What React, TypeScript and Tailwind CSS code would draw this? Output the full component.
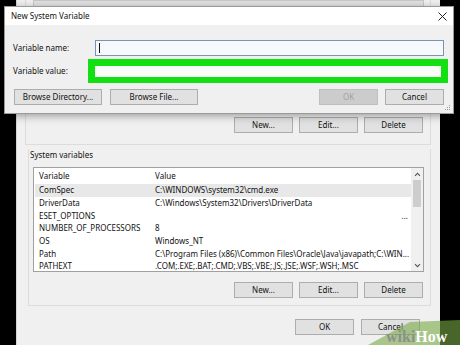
import React from "react";

type Row = { name: string; value: string; selected?: boolean; more?: boolean };

const rows: Row[] = [
  { name: "ComSpec", value: "C:\\WINDOWS\\system32\\cmd.exe", selected: true },
  { name: "DriverData", value: "C:\\Windows\\System32\\Drivers\\DriverData" },
  { name: "ESET_OPTIONS", value: "", more: true },
  { name: "NUMBER_OF_PROCESSORS", value: "8" },
  { name: "OS", value: "Windows_NT" },
  {
    name: "Path",
    value: "C:\\Program Files (x86)\\Common Files\\Oracle\\Java\\javapath;C:\\WIN...",
  },
  { name: "PATHEXT", value: ".COM;.EXE;.BAT;.CMD;.VBS;.VBE;.JS;.JSE;.WSF;.WSH;.MSC" },
];

function WinButton({
  label,
  width,
  disabled,
}: {
  label: string;
  width: string;
  disabled?: boolean;
}) {
  return (
    <div
      className={
        "h-[16px] flex items-center justify-center border text-[8px] leading-none " +
        width +
        (disabled
          ? " bg-[#cccccc] border-[#bfbfbf] text-[#a3a3a3]"
          : " bg-[#e1e1e1] border-[#adadad] text-[#111]")
      }
    >
      {label}
    </div>
  );
}

function Chevron({ down }: { down?: boolean }) {
  return (
    <svg width="7" height="5" viewBox="0 0 7 5" className="mx-auto">
      <path
        d={down ? "M1 1.2 L3.5 3.7 L6 1.2" : "M1 3.8 L3.5 1.3 L6 3.8"}
        fill="none"
        stroke="#555"
        strokeWidth="1.1"
      />
    </svg>
  );
}

function ActionRow() {
  return (
    <div className="flex justify-end gap-[6px]">
      <WinButton label="New..." width="w-[59px]" />
      <WinButton label="Edit..." width="w-[59px]" />
      <WinButton label="Delete" width="w-[59px]" />
    </div>
  );
}

export default function App() {
  return (
    <div className="relative w-[460px] h-[345px] bg-black overflow-hidden font-['Noto_Sans',sans-serif] text-[#111]">
      {/* Environment Variables window behind */}
      <div className="ml-[16px] w-[424px] h-[345px] bg-[#f0f0f0] border-l border-[#d4d4d4] flex flex-col">
        {/* user variables group */}
        <div className="ml-[8px] w-[406px] h-[145px] border-x border-b border-[#dcdcdc] flex flex-col pr-[7px]">
          <div className="ml-[7px] w-[391px] h-[110px] bg-[#e2e2e2] border border-[#c8c8c8]" />
          <div className="mt-[7px]">
            <ActionRow />
          </div>
        </div>

        {/* system variables group */}
        <div className="ml-[11px] mt-[4px] w-[403px] border-x border-b border-[#dcdcdc] flex flex-col pr-[7px] pb-[7px]">
          <div className="pl-[1px] h-[12px] flex items-center text-[8px] leading-none">
            System variables
          </div>
          <div className="ml-[4px] mt-[6px] w-[391px] h-[105px] bg-white border border-[#a0a0a0] flex overflow-hidden">
            <div className="flex-1 flex flex-col text-[8px] leading-[12px]">
              <div className="h-[16px] shrink-0 flex items-center">
                <div className="w-[121px] pl-[5px]">Variable</div>
                <div>Value</div>
              </div>
              {rows.map((r) => (
                <div
                  key={r.name}
                  className={
                    "h-[12.7px] shrink-0 flex items-center ml-[1px] whitespace-nowrap " +
                    (r.selected ? "bg-[#e8e8e8]" : "")
                  }
                >
                  <div className="w-[120px] pl-[4px]">{r.name}</div>
                  <div className="flex-1">{r.value}</div>
                  {r.more && <div className="pr-[3px] text-[#111]">...</div>}
                </div>
              ))}
            </div>
            <div className="w-[12px] bg-[#f0f0f0] flex flex-col pt-[4px] pb-[3px]">
              <Chevron />
              <div className="mx-auto mt-[3px] w-[8px] h-[27px] bg-[#cdcdcd]" />
              <div className="flex-1" />
              <Chevron down />
            </div>
          </div>
          <div className="mt-[10px]">
            <ActionRow />
          </div>
        </div>

        <div className="mt-[13px] pr-[20px] flex justify-end gap-[7px]">
          <WinButton label="OK" width="w-[59px]" />
          <WinButton label="Cancel" width="w-[59px]" />
        </div>
      </div>

      {/* New System Variable dialog */}
      <div className="absolute left-[4px] top-[6px] w-[450px] h-[108px] flex flex-col border border-[#9a9a9a] shadow-[0_2px_8px_rgba(0,0,0,0.35)]">
        <div className="h-[18px] bg-white flex items-center justify-between pl-[6px] pr-[6px] text-[8px] leading-none">
          <span>New System Variable</span>
          <svg width="9" height="9" viewBox="0 0 9 9">
            <path d="M0.5 0.5 L8.5 8.5 M8.5 0.5 L0.5 8.5" stroke="#222" strokeWidth="1" />
          </svg>
        </div>
        <div className="relative flex-1 bg-[#f0f0f0] flex flex-col pt-[15px] text-[8px] leading-none">
          <div className="flex items-center">
            <div className="w-[90px] pl-[8px]">Variable name:</div>
            <div className="w-[349px] h-[16px] border border-[#7b93ad] bg-[#f5f9fc] flex items-center pl-[3px]">
              <div className="w-[1px] h-[10px] bg-[#111]" />
            </div>
          </div>
          <div className="flex items-center mt-[3px]">
            <div className="w-[83px] pl-[8px]">Variable value:</div>
            <div className="w-[360px] h-[24px] border-[7px] border-b-[6px] border-[#13e013] bg-[#f8fdf8]" />
          </div>
          <div className="flex items-center mt-[6px] pl-[9px] pr-[9px]">
            <WinButton label="Browse Directory..." width="w-[88px]" />
            <div className="ml-[8px]">
              <WinButton label="Browse File..." width="w-[88px]" />
            </div>
            <div className="flex-1" />
            <WinButton label="OK" width="w-[59px]" disabled />
            <div className="ml-[7px]">
              <WinButton label="Cancel" width="w-[59px]" />
            </div>
          </div>
          <svg
            width="6"
            height="6"
            viewBox="0 0 6 6"
            className="absolute right-[2px] bottom-[2px]"
          >
            <rect x="4" y="0" width="1" height="1" fill="#999" />
            <rect x="2" y="2" width="1" height="1" fill="#999" />
            <rect x="4" y="2" width="1" height="1" fill="#999" />
            <rect x="0" y="4" width="1" height="1" fill="#999" />
            <rect x="2" y="4" width="1" height="1" fill="#999" />
            <rect x="4" y="4" width="1" height="1" fill="#999" />
          </svg>
        </div>
      </div>

      {/* wikiHow watermark */}
      <svg
        width="100"
        height="30"
        viewBox="0 0 100 30"
        className="absolute right-0 bottom-0"
      >
        <polygon points="8,30 50,7 100,5 100,30" fill="rgb(120,170,70)" opacity="0.6" />
        <text
          x="26"
          y="27"
          fontFamily="Liberation Serif, serif"
          fontWeight="bold"
          fontSize="16"
        >
          <tspan fill="#8e8e8e">wiki</tspan>
          <tspan fill="#ffffff">How</tspan>
        </text>
      </svg>
    </div>
  );
}
